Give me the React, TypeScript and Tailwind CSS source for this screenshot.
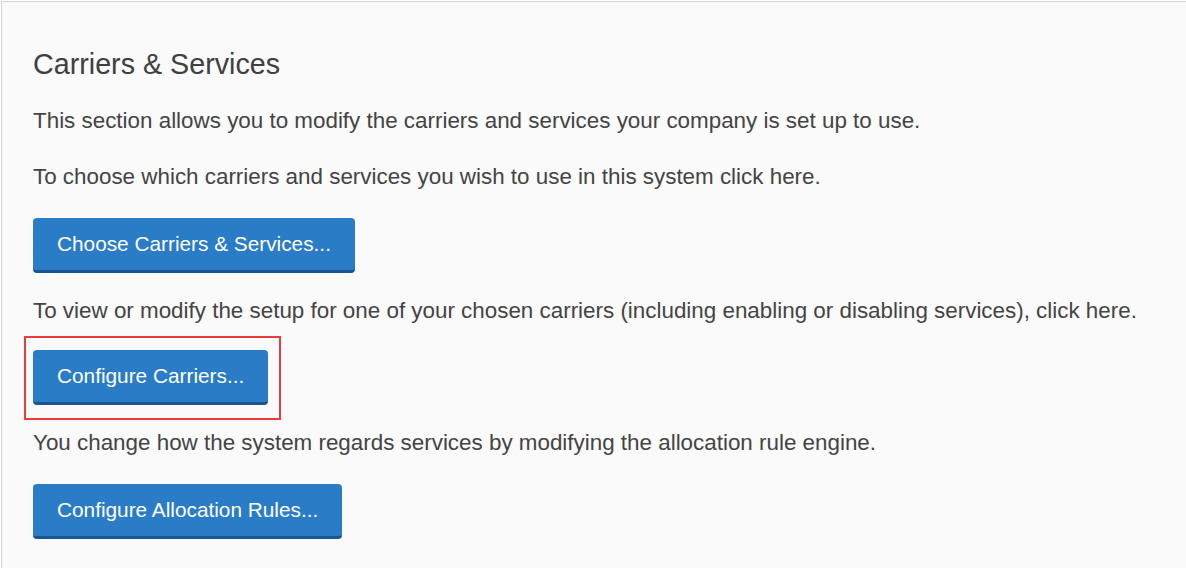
export default function App() {
  const btn =
    "inline-flex h-[55px] items-center rounded-[4px] border-b-[3px] border-[#17568f] bg-[#2a7cc6] px-[24px] text-[20.8px] leading-[24px] text-white";

  return (
    <div className="h-[568px] w-[1186px] overflow-hidden bg-white pl-px pt-px font-['Liberation_Sans',Arial,sans-serif]">
      <div className="h-full border-l border-t border-[#d3d3d3] bg-[#fafafa] pl-[31px] text-[#444]">
        <h1 className="mt-[46px] text-[28.7px] leading-[33px] text-[#404040]">
          Carriers &amp; Services
        </h1>
        <p className="mt-[27px] text-[22.4px] leading-[25px]">
          This section allows you to modify the carriers and services your company is set up to use.
        </p>
        <p className="mt-[31px] text-[22.4px] leading-[25px]">
          To choose which carriers and services you wish to use in this system click here.
        </p>
        <div className="mt-[29px]">
          <button className={btn}>Choose Carriers &amp; Services...</button>
        </div>
        <p className="mt-[25px] text-[22.4px] leading-[25px]">
          To view or modify the setup for one of your chosen carriers (including enabling or disabling services), click here.
        </p>
        <div className="mt-[27px]">
          <div className="relative inline-block">
            <button className={btn}>Configure Carriers...</button>
            <div className="pointer-events-none absolute -bottom-[15px] -left-[9px] -right-[13px] -top-[14px] border-2 border-[#ec3b3b]" />
          </div>
        </div>
        <p className="mt-[25px] text-[22.4px] leading-[25px]">
          You change how the system regards services by modifying the allocation rule engine.
        </p>
        <div className="mt-[29px]">
          <button className={btn}>Configure Allocation Rules...</button>
        </div>
      </div>
    </div>
  );
}
